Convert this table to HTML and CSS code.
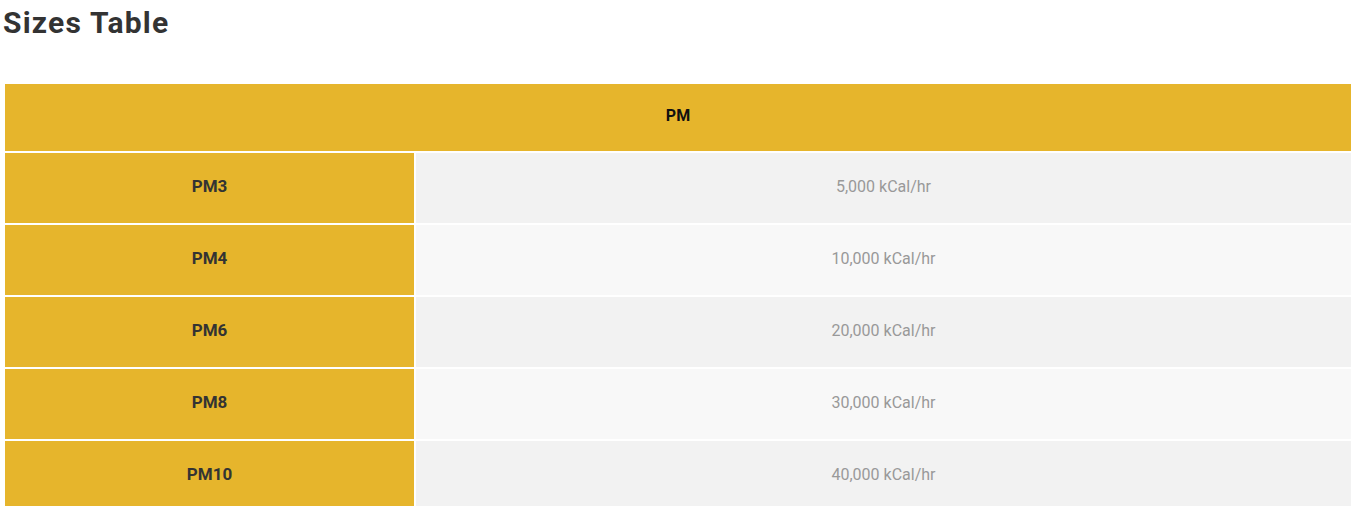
FILE: index.html
```html
<!DOCTYPE html>
<html lang="en">
<head>
<meta charset="utf-8">
<title>Sizes Table</title>
<link rel="stylesheet" href="styles.css">
</head>
<body>
<div class="page">
  <h2 class="title">Sizes Table</h2>
  <table class="sizes">
    <thead>
      <tr><th colspan="2" class="head">PM</th></tr>
    </thead>
    <tbody>
      <tr><th class="label">PM3</th><td class="value">5,000 kCal/hr</td></tr>
      <tr><th class="label">PM4</th><td class="value">10,000 kCal/hr</td></tr>
      <tr><th class="label">PM6</th><td class="value">20,000 kCal/hr</td></tr>
      <tr><th class="label">PM8</th><td class="value">30,000 kCal/hr</td></tr>
      <tr><th class="label">PM10</th><td class="value">40,000 kCal/hr</td></tr>
    </tbody>
  </table>
</div>
</body>
</html>
```
FILE: styles.css
```css
html, body {
  margin: 0;
  padding: 0;
  background: #ffffff;
  font-family: Roboto, "Liberation Sans", sans-serif;
}
.page {
  padding: 0 15px 0 3px;
}
.title {
  margin: 0;
  padding-top: 5px;
  font-size: 30px;
  line-height: 36px;
  font-weight: 700;
  letter-spacing: 1.2px;
  color: #333333;
}
.sizes {
  margin-top: 41px;
  width: 100%;
  border-collapse: separate;
  border-spacing: 2px;
}
.sizes th, .sizes td {
  box-sizing: border-box;
  padding: 0 0 4px;
  text-align: center;
  vertical-align: middle;
}
.head {
  height: 67px;
  background: #e6b52c;
  color: #111111;
  font-size: 16px;
  font-weight: 700;
}
.label {
  width: 409px;
  height: 70px;
  background: #e6b52c;
  color: #333333;
  font-size: 17px;
  font-weight: 700;
}
.value {
  height: 70px;
  color: #999999;
  font-size: 16px;
  font-weight: 400;
}
.sizes tbody tr:nth-child(odd) .value { background: #f2f2f2; }
.sizes tbody tr:nth-child(even) .value { background: #f8f8f8; }
```
